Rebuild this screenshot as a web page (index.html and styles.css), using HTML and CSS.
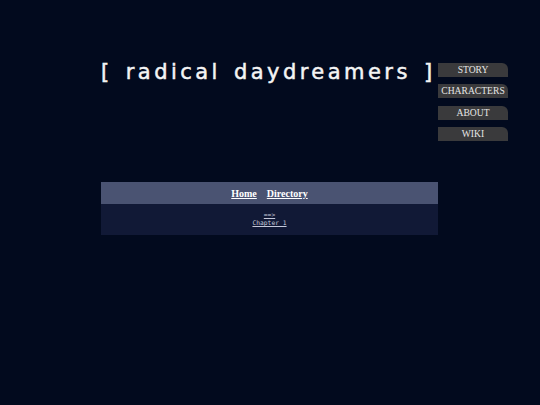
FILE: index.html
```html
<!DOCTYPE html>
<html>
<head>
<meta charset="utf-8">
<link rel="stylesheet" href="styles.css">
</head>
<body>
<div class="top">
  <h1 class="title">[ radical daydreamers ]</h1>
  <nav class="nav">
    <a class="btn" href="#">STORY</a>
    <a class="btn" href="#">CHARACTERS</a>
    <a class="btn" href="#">ABOUT</a>
    <a class="btn" href="#">WIKI</a>
  </nav>
</div>
<div class="box">
  <div class="box-head">
    <a href="#">Home</a>
    <a href="#">Directory</a>
  </div>
  <div class="box-body">
    <a href="#">==&gt;</a>
    <a href="#">Chapter 1</a>
  </div>
</div>
</body>
</html>
```
FILE: styles.css
```css
html, body {
  margin: 0;
  padding: 0;
  background: #020a1e;
  height: 100%;
}
.top {
  display: flex;
  padding-top: 62px;
  margin-left: 101px;
}
.title {
  width: 337px;
  margin: 0;
  font-family: "DejaVu Sans", sans-serif;
  font-weight: normal;
  font-size: 21px;
  letter-spacing: 3.45px;
  word-spacing: 3px;
  -webkit-text-stroke: 0.5px #f4f4f4;
  color: #f4f4f4;
  line-height: 20px;
  white-space: nowrap;
}
.nav {
  display: flex;
  flex-direction: column;
  gap: 7.4px;
  width: 70px;
  margin-top: 1px;
}
.btn {
  display: block;
  height: 14px;
  line-height: 14px;
  background: #3a3a3c;
  color: #e6e6e6;
  text-decoration: none;
  font-family: "Liberation Serif", serif;
  font-size: 9.6px;
  text-align: center;
  border-top-right-radius: 6px;
  white-space: nowrap;
}
.box {
  margin: 41px 0 0 101px;
  width: 337px;
}
.box-head {
  height: 22px;
  background: #4a5372;
  display: flex;
  justify-content: center;
  align-items: center;
  gap: 10px;
}
.box-head a {
  font-family: "Liberation Serif", serif;
  font-weight: bold;
  font-size: 10px;
  color: #ffffff;
}
.box-body {
  height: 31px;
  background: #111936;
  display: flex;
  flex-direction: column;
  align-items: center;
  padding-top: 7px;
  box-sizing: border-box;
}
.box-body a {
  font-family: "DejaVu Sans Mono", monospace;
  font-size: 6.3px;
  line-height: 8px;
  color: #c4c8da;
}
```
